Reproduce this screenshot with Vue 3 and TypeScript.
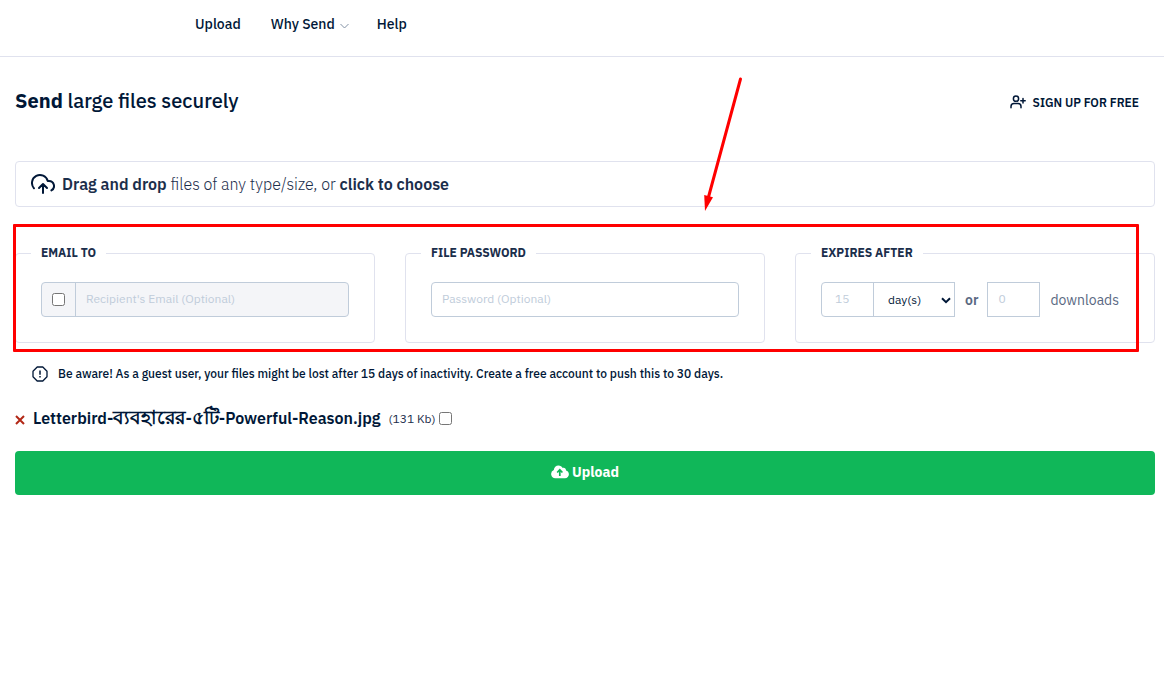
<script setup lang="ts">
import { ref } from 'vue'

const emailEnabled = ref(false)
const email = ref('')
const password = ref('')
const amount = ref('')
const unit = ref('days')
const downloads = ref('')
const selected = ref(false)
const fileSize = '131 Kb'
const nameParts = [
  { text: 'Letterbird-', bengali: false },
  { text: 'ব্যবহারের', bengali: true },
  { text: '-', bengali: false },
  { text: '৫টি', bengali: true },
  { text: '-Powerful-Reason.jpg', bengali: false },
]
</script>

<template>
  <div class="page">
    <header class="topbar">
      <nav class="nav" aria-label="Main">
        <a href="#upload">Upload</a>
        <a href="#why" class="with-caret">Why Send
          <svg width="9" height="6" viewBox="0 0 9 6" aria-hidden="true"><path d="M.5 1l4 4 4-4" fill="none" stroke="#8392a5" /></svg>
        </a>
        <a href="#help">Help</a>
      </nav>
    </header>

    <main class="content">
      <div class="heading">
        <h1><strong>Send</strong> large files securely</h1>
        <a href="#signup" class="signup">
          <svg width="16" height="16" viewBox="0 0 16 16" fill="none" stroke="#001737" stroke-width="1.5" stroke-linecap="round" aria-hidden="true">
            <circle cx="6" cy="4.700" r="2.600" />
            <path d="M1 13.700v-1.200c0-1.800 1.200-3 3-3h4c1.800 0 3 1.200 3 3v1.200M13 4.500v4.500M10.800 6.750h4.400" />
          </svg>
          SIGN UP FOR FREE
        </a>
      </div>

      <button type="button" class="dropzone">
        <svg width="24" height="24" viewBox="0 0 24 24" fill="none" stroke="#001737" stroke-width="2" stroke-linecap="round" stroke-linejoin="round" aria-hidden="true">
          <path d="M16 16l-4-4-4 4M12 12v9" />
          <path d="M20.390 18.390A5 5 0 0 0 18 9h-1.260A8 8 0 1 0 3 16.300" />
        </svg>
        <span><strong>Drag and drop</strong> files of any type/size, or <strong>click to choose</strong></span>
      </button>

      <section class="options">
        <fieldset>
          <legend>EMAIL TO</legend>
          <div class="group email">
            <span class="check-cell"><input v-model="emailEnabled" type="checkbox" aria-label="Send by email" /></span>
            <input v-model="email" class="field" type="email" placeholder="Recipient's Email (Optional)" aria-label="Recipient's Email" :disabled="!emailEnabled" />
          </div>
        </fieldset>
        <fieldset>
          <legend>FILE PASSWORD</legend>
          <div class="group">
            <input v-model="password" class="field" type="password" placeholder="Password (Optional)" aria-label="File password" />
          </div>
        </fieldset>
        <fieldset>
          <legend>EXPIRES AFTER</legend>
          <div class="expiry">
            <input v-model="amount" class="number first" type="text" placeholder="15" aria-label="Expires after" />
            <span class="unit">
              <select v-model="unit" aria-label="Time unit">
                <option value="days">day(s)</option>
                <option value="hours">hour(s)</option>
              </select>
              <svg width="10" height="7" viewBox="0 0 10 7" aria-hidden="true"><path d="M1 1.200l4 4 4-4" fill="none" stroke="#001737" stroke-width="2" /></svg>
            </span>
            <strong class="or">or</strong>
            <input id="downloads" v-model="downloads" class="number" type="text" placeholder="0" />
            <label for="downloads">downloads</label>
          </div>
        </fieldset>
        <div class="highlight"></div>
        <svg class="arrow" width="50" height="140" viewBox="0 0 50 140" aria-hidden="true">
          <path d="M44.500 6L12.500 124" stroke="#f00" stroke-width="3" stroke-linecap="round" />
          <path d="M8.200 122l8.800 2.200L9 138z" fill="#f00" />
        </svg>
      </section>

      <p class="notice">
        <svg width="16" height="16" viewBox="0 0 16 16" fill="none" stroke="#001737" stroke-width="1.300" stroke-linejoin="round" aria-hidden="true">
          <path d="M5.200 1h5.600L15 5.200v5.600L10.800 15H5.200L1 10.800V5.200z" />
          <path d="M8 4.500v4.300M8 10v1.500" stroke-width="1.500" />
        </svg>
        <span>Be aware! As a guest user, your files might be lost after 15 days of inactivity. Create a free account to push this to 30 days.</span>
      </p>

      <div class="file">
        <button type="button" class="remove" aria-label="Remove file">
          <svg width="10" height="10" viewBox="0 0 10 10" aria-hidden="true"><path d="M1 1l8 8M9 1L1 9" stroke="#b22716" stroke-width="2" /></svg>
        </button>
        <strong><span v-for="(part, i) in nameParts" :key="i" :class="{ bengali: part.bengali }">{{ part.text }}</span></strong>
        <span class="size">({{ fileSize }})</span>
        <input v-model="selected" type="checkbox" aria-label="Select file" />
      </div>

      <button type="button" class="upload">
        <svg width="18" height="14" viewBox="0 0 18 14" aria-hidden="true">
          <path d="M4.300 13.200A4.200 4.200 0 0 1 2.800 5.100C3 2.500 5 .5 7.500.5c1.900 0 3.400 1 4.200 2.500 1.800-.6 3.400.7 3.300 2.500 1.700.4 2.900 1.900 2.900 3.700 0 2.200-1.700 4-3.900 4z" fill="#fff" />
          <path d="M8.800 11V6M6.200 7.500L8.800 4.700l2.600 2.800" fill="none" stroke="#10b759" stroke-width="1.700" />
        </svg>
        Upload
      </button>
    </main>
  </div>
</template>

<style>
body { margin: 0; background: #fff; }
</style>

<style scoped>
* { box-sizing: border-box; }
.page, button, input, select { font-family: "IBM Plex Sans", "Noto Sans", "Open Sans", sans-serif; }
.page { color: #001737; font-size: 14px; }
a { color: inherit; text-decoration: none; }
strong { font-weight: 600; }
.topbar { height: 57px; border-bottom: 1px solid #e0e2ee; padding: 14px 195px; }
.nav { display: flex; gap: 28px; font-size: 14px; line-height: 20px; font-weight: 500; }
.nav a:first-child { margin-right: 2px; }
.with-caret { display: flex; align-items: center; gap: 5px; }
.with-caret svg { margin-top: 4px; }
.content { padding: 28px 9px 0 15px; }
.heading { display: flex; align-items: center; justify-content: space-between; height: 32px; padding-right: 16px; }
h1 { margin: 0; font-size: 20px; line-height: 30px; font-weight: 500; }
h1 strong { font-weight: 700; }
.signup { display: flex; align-items: center; gap: 7px; margin-top: 2px; font-size: 12px; font-weight: 600; }
.dropzone { display: flex; align-items: center; gap: 7px; width: 100%; height: 46px; margin-top: 44px; padding: 0 15px; background: #fff; border: 1px solid #e0e2ee; border-radius: 4px; font-size: 16px; font-weight: 300; color: #1b2e4b; text-align: left; }
.options { position: relative; display: grid; grid-template-columns: repeat(3, minmax(0, 1fr)); gap: 30px; margin-top: 38px; }
fieldset { min-width: 0; margin: 0; padding: 21px 25px 25px; border: 1px solid #e0e2ee; border-radius: 4px; }
legend { margin-left: -10px; padding: 0 10px; font-size: 12px; line-height: 16px; font-weight: 700; color: #1b2e4b; }
.group { display: flex; height: 35px; border: 1px solid #c0ccda; border-radius: 4px; overflow: hidden; }
.email { background: #f4f5f8; }
.check-cell { display: flex; align-items: center; justify-content: center; width: 34px; border-right: 1px solid #c0ccda; }
input[type="checkbox"] { width: 13px; height: 13px; margin: 0; }
.field { flex: 1; min-width: 0; padding: 0 10px 2px; border: 0; background: transparent; font-size: 12px; color: #1b2e4b; }
::placeholder { color: #c0ccda; opacity: 1; }
.expiry { display: flex; align-items: center; height: 35px; }
.number { width: 53px; height: 35px; padding: 0 10px 2px; border: 1px solid #c0ccda; background: #fff; font-size: 12px; color: #1b2e4b; }
.first { padding: 0 13px 2px; border-radius: 4px 0 0 4px; }
.unit { position: relative; width: 82px; margin-left: -1px; }
.unit select { display: block; width: 100%; height: 35px; padding: 0 14px; border: 1px solid #c0ccda; border-radius: 0; background: #fff; appearance: none; font-size: 12px; color: #001737; }
.unit svg { position: absolute; right: 4px; top: 15px; pointer-events: none; }
.or { margin: 0 9px 0 10px; color: #596882; }
.expiry label { margin-left: 10px; color: #596882; font-size: 14px; }
.highlight { position: absolute; inset: -21px 16px -9px -2px; border: 3px solid #f00; border-radius: 1px; pointer-events: none; }
.arrow { position: absolute; left: 681px; top: -172px; pointer-events: none; }
.notice { display: flex; align-items: center; gap: 10px; margin: 21px 0 0 17px; font-size: 12px; line-height: 20px; font-weight: 500; }
.file { display: flex; align-items: center; height: 24px; margin-top: 22px; font-size: 16px; line-height: 24px; }
.bengali { font-size: 19px; line-height: 20px; font-weight: 700; }
.remove { display: flex; width: 10px; height: 10px; margin: 4px 8px 0 0; padding: 0; border: 0; background: none; }
.size { margin: 2px 3px 0 8px; font-size: 12px; color: #1b2e4b; }
.upload { display: flex; align-items: center; justify-content: center; gap: 3px; width: 100%; height: 44px; margin-top: 21px; padding: 0 0 2px; border: 0; border-radius: 4px; background: #10b759; color: #fff; font-size: 14px; font-weight: 700; }
</style>
